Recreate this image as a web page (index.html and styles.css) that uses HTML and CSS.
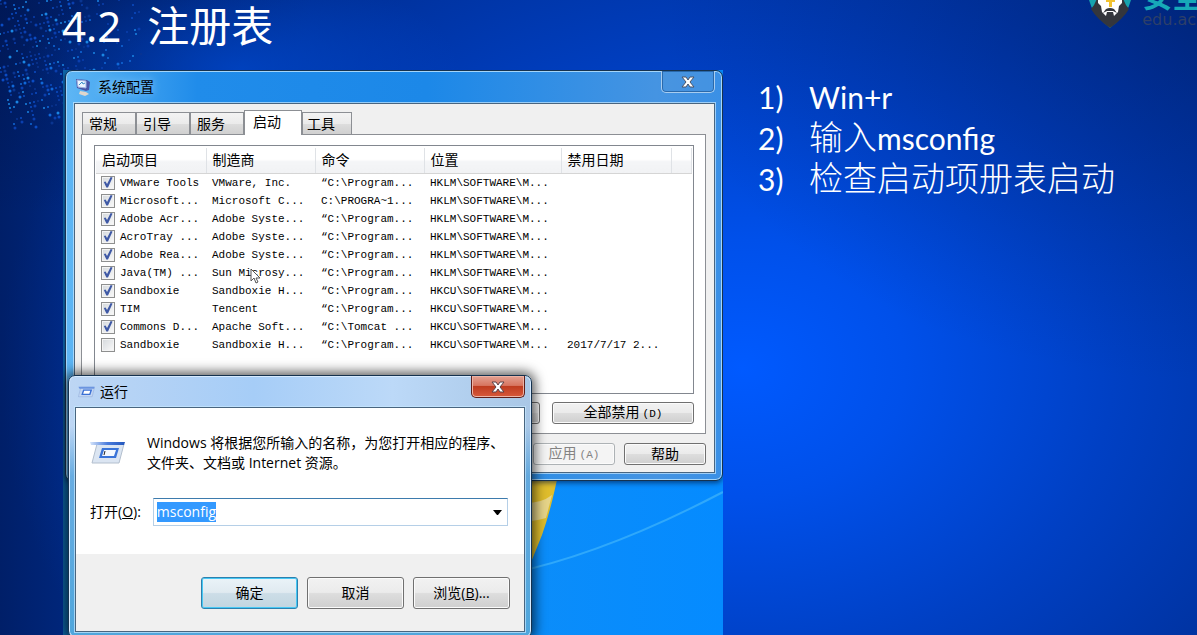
FILE: index.html
```html
<!DOCTYPE html>
<html lang="zh-CN">
<head>
<meta charset="utf-8">
<title>4.2 注册表</title>
<link rel="stylesheet" href="styles.css">
</head>
<body>
<div class="slide">
  <svg class="dots" id="dots" width="160" height="160" aria-hidden="true"></svg>

  <div class="brand">
    <svg class="brand-mark" width="42" height="52" viewBox="0 0 42 52" aria-hidden="true">
      <path d="M0 0H42V24Q39 38 21 52Q3 38 0 24Z" fill="#17a3ae"/>
      <path d="M2 33Q6 29 8 22L21 16L34 22Q36 29 40 33Q34 43 21 52Q8 43 2 33Z" fill="#34363c"/>
      <path d="M9 12H33V27L30 30L29 36L27 38L25 40L24 36H18L17 40L14 37L13 36L12 30L9 27Z" fill="#fff"/>
      <path d="M14 37L17 33Q21 31 25 33L28 37L24 35H18Z" fill="#34363c"/>
      <path d="M20 18H23V31H20ZM17 24H26V26H17Z" fill="#f2c230"/>
    </svg>
    <div class="brand-text"><span class="brand-name">安全</span><span class="brand-url">edu.ac</span></div>
  </div>

  <h1 class="title"><span>4.2</span><span>注册表</span></h1>

  <div class="columns">
    <section class="desktop">
      <svg class="wallpaper" viewBox="0 0 660 565" preserveAspectRatio="none" aria-hidden="true">
        <path d="M440 400H496Q488 440 479 465L460 512L440 565Z" fill="#dfbd2c"/>
        <path d="M450 432Q475 436 489 425L483 448Q470 452 450 452Z" fill="#e6d488"/>
        <path d="M440 505Q540 485 660 422" fill="none" stroke="#2fa8fb" stroke-width="2"/>
        <path d="M260 565Q340 552 430 565Z" fill="#b6cf6a"/>
      </svg>

      <div class="window config">
        <header class="titlebar">
          <svg width="16" height="18" viewBox="0 0 16 18" aria-hidden="true">
            <path d="M1 1L12 2L15 4L14 12L11 13L2 10Z" fill="#4a55a8"/>
            <path d="M2 2L11 3L11 10L3 9Z" fill="#eef4ff" stroke="#9fb2e0"/>
            <path d="M4 7L7 4L8 6L10 5" stroke="#3c8fc8" fill="none"/>
            <path d="M5 13L11 14L14 16L10 18L4 16Z" fill="#ded6cc"/>
          </svg>
          <h2>系统配置</h2>
          <button class="close" aria-label="关闭"><svg width="14" height="12" viewBox="0 0 14 12"><path d="M1 1H5L7 4L9 1H13L9 6L13 11H9L7 8L5 11H1L5 6Z" fill="#fff" stroke="#4c5468"/></svg></button>
        </header>
        <div class="client">
          <div class="tabs" role="tablist">
            <button role="tab" class="tab">常规</button>
            <button role="tab" class="tab">引导</button>
            <button role="tab" class="tab">服务</button>
            <button role="tab" class="tab active" aria-selected="true">启动</button>
            <button role="tab" class="tab">工具</button>
          </div>
          <div class="panel">
            <div class="list">
              <table>
                <colgroup><col class="c-item"><col class="c-maker"><col class="c-maker"><col class="c-place"><col class="c-item"><col></colgroup>
                <thead><tr><th>启动项目</th><th>制造商</th><th>命令</th><th>位置</th><th>禁用日期</th><th></th></tr></thead>
                <tbody>
                  <tr><td><label><input type="checkbox" checked>VMware Tools</label></td><td>VMware, Inc.</td><td>“C:\Program...</td><td>HKLM\SOFTWARE\M...</td><td></td><td></td></tr>
                  <tr><td><label><input type="checkbox" checked>Microsoft...</label></td><td>Microsoft C...</td><td>C:\PROGRA~1...</td><td>HKLM\SOFTWARE\M...</td><td></td><td></td></tr>
                  <tr><td><label><input type="checkbox" checked>Adobe Acr...</label></td><td>Adobe Syste...</td><td>“C:\Program...</td><td>HKLM\SOFTWARE\M...</td><td></td><td></td></tr>
                  <tr><td><label><input type="checkbox" checked>AcroTray ...</label></td><td>Adobe Syste...</td><td>“C:\Program...</td><td>HKLM\SOFTWARE\M...</td><td></td><td></td></tr>
                  <tr><td><label><input type="checkbox" checked>Adobe Rea...</label></td><td>Adobe Syste...</td><td>“C:\Program...</td><td>HKLM\SOFTWARE\M...</td><td></td><td></td></tr>
                  <tr><td><label><input type="checkbox" checked>Java(TM) ...</label></td><td>Sun Microsy...</td><td>“C:\Program...</td><td>HKLM\SOFTWARE\M...</td><td></td><td></td></tr>
                  <tr><td><label><input type="checkbox" checked>Sandboxie</label></td><td>Sandboxie H...</td><td>“C:\Program...</td><td>HKCU\SOFTWARE\M...</td><td></td><td></td></tr>
                  <tr><td><label><input type="checkbox" checked>TIM</label></td><td>Tencent</td><td>“C:\Program...</td><td>HKCU\SOFTWARE\M...</td><td></td><td></td></tr>
                  <tr><td><label><input type="checkbox" checked>Commons D...</label></td><td>Apache Soft...</td><td>“C:\Tomcat ...</td><td>HKCU\SOFTWARE\M...</td><td></td><td></td></tr>
                  <tr><td><label><input type="checkbox">Sandboxie</label></td><td>Sandboxie H...</td><td>“C:\Program...</td><td>HKCU\SOFTWARE\M...</td><td>2017/7/17 2...</td><td></td></tr>
                </tbody>
              </table>
            </div>
            <div class="actions">
              <button class="btn wide" aria-label="全部启用"></button>
              <button class="btn wide">全部禁用<span class="key">(D)</span></button>
            </div>
          </div>
          <div class="footer">
            <button class="btn" disabled>应用<span class="key">(A)</span></button>
            <button class="btn">帮助</button>
          </div>
        </div>
        <svg class="cursor" width="11" height="17" viewBox="0 0 11 17" aria-hidden="true"><path d="M1 1V13L4 10L6 15L8 14L6 10H10Z" fill="#fff" stroke="#555"/></svg>
      </div>

      <div class="window run">
        <header class="titlebar">
          <svg width="17" height="12" viewBox="0 0 36 24" aria-hidden="true">
            <path d="M6 2H35L30 22H1Z" fill="#c3d6f3" stroke="#8aa6d4"/>
            <path d="M1 1H35L34 5H3Z" fill="#6b95e0"/>
            <path d="M12 8H28L25 17H9Z" fill="#fff" stroke="#3a70d4" stroke-width="3"/>
          </svg>
          <h2>运行</h2>
          <button class="close red" aria-label="关闭"><svg width="14" height="12" viewBox="0 0 14 12"><path d="M1 1H5L7 4L9 1H13L9 6L13 11H9L7 8L5 11H1L5 6Z" fill="#fff" stroke="#5c4248"/></svg></button>
        </header>
        <div class="client">
          <div class="run-body">
            <div class="intro">
              <svg width="36" height="24" viewBox="0 0 36 24" aria-hidden="true">
                <defs><linearGradient id="bar" x1="0" x2="1"><stop offset="0" stop-color="#d5e4fa"/><stop offset=".5" stop-color="#4a7cdc"/><stop offset="1" stop-color="#2357bd"/></linearGradient></defs>
                <path d="M7 3H34L29 22H2Z" fill="#dbe5f2" stroke="#b3bfce"/>
                <path d="M0 1H35L34 4H1Z" fill="url(#bar)"/>
                <path d="M12 7H29L26 17H9Z" fill="#3a74d8"/>
                <path d="M14 9H26L24 15H12Z" fill="#f4f9ff"/>
                <path d="M15 10L14 14" stroke="#222"/>
              </svg>
              <p>Windows 将根据您所输入的名称，为您打开相应的程序、<br>文件夹、文档或 Internet 资源。</p>
            </div>
            <div class="field">
              <label for="open">打开(<u>O</u>):</label>
              <div class="combo">
                <input id="open" type="text" value="msconfig" autocomplete="off" spellcheck="false">
                <button aria-label="展开列表"><svg width="9" height="5" viewBox="0 0 9 5"><path d="M0 0H9L5 5H4Z"/></svg></button>
              </div>
            </div>
          </div>
          <div class="run-foot">
            <button class="btn default">确定</button>
            <button class="btn">取消</button>
            <button class="btn">浏览(<u>B</u>)...</button>
          </div>
        </div>
      </div>
    </section>

    <ol class="steps">
      <li><span>1)</span><span>Win+r</span></li>
      <li><span>2)</span><span><span class="cjk">输入</span>msconfig</span></li>
      <li><span>3)</span><span class="cjk">检查启动项册表启动</span></li>
    </ol>
  </div>
</div>
<script src="app.js"></script>
</body>
</html>
```

FILE: styles.css
```css
* { box-sizing: border-box; }

body { margin: 0; }

h1, h2, p, ol { margin: 0; padding: 0; font-weight: 400; }

button, input { font: inherit; color: inherit; margin: 0; }

.slide {
  position: relative;
  display: flex;
  flex-direction: column;
  height: 100vh;
  overflow: hidden;
  color: #fff;
  background:
    radial-gradient(ellipse 220px 100px at 20% 11%, rgba(0, 70, 200, .8), transparent),
    radial-gradient(ellipse 26% 34% at 0% 0%, rgba(0, 14, 60, .4), transparent),
    radial-gradient(ellipse 45% 60% at 100% 0%, rgba(0, 20, 80, .35), transparent),
    linear-gradient(90deg, rgba(0, 14, 60, .35), transparent 7%),
    radial-gradient(ellipse 62% 92% at 62% 58%, #005aff 0%, #0050ea 22%, #0040c4 50%, #0034a4 75%, #002880 100%);
}

.dots { position: absolute; left: 0; top: 0; }

.brand {
  position: absolute;
  top: -24px;
  left: 91%;
  display: flex;
  gap: 11px;
  white-space: nowrap;
}
.brand-text { display: flex; flex-direction: column; }
.brand-name {
  font: 700 30px/36px "Noto Sans CJK SC", sans-serif;
  color: #17a9b8;
}
.brand-url {
  font: 16px/16px "DejaVu Sans", sans-serif;
  color: #2d3f69;
}

.title {
  position: relative;
  display: flex;
  gap: 26px;
  padding: 0 62px;
  font: 400 42px/52px "Noto Sans", "Noto Sans CJK SC", sans-serif;
  height: 70px;
}

.columns {
  flex: 1;
  display: grid;
  grid-template-columns: 660fr 439fr;
  gap: 35px;
  padding-left: 63px;
  min-height: 0;
}

.desktop {
  position: relative;
  overflow: hidden;
  background: linear-gradient(90deg, #0d66a8, #128ff4 40%, #058bff);
  color: #000;
  font: 14px/20px "Open Sans", "Noto Sans CJK SC", sans-serif;
}
.wallpaper { position: absolute; width: 100%; height: 100%; }

.window {
  position: absolute;
  border: 1px solid #15324f;
  border-radius: 7px;
}
.window .client {
  border: 1px solid #49657f;
  outline: 1px solid rgba(200, 232, 255, .7);
}
.config {
  left: 2px;
  right: 0;
  top: 0;
  padding: 0 7px 7px 8px;
  background: linear-gradient(90deg, #5eb6f4, #208cea 20%, #1c88e8 55%, #4594e2 90%, #3a90e6);
  box-shadow: inset 0 0 0 1px #a4d5f9, 0 2px 5px rgba(0, 20, 60, .6);
}
.run {
  left: 5px;
  top: 305px;
  width: 464px;
  padding: 0 6px 5px 6px;
  background:
    linear-gradient(180deg, transparent 50px, rgba(68, 155, 218, .7) 100px, #4fa6dc),
    linear-gradient(90deg, #bdd6f4, #a6cdf7 40%, #bcd9f8 70%, #a9c7e6);
  box-shadow: inset 0 0 0 1px #d7ebff, 0 0 12px 3px rgba(0, 0, 0, .65);
}

.titlebar {
  display: flex;
  align-items: center;
  gap: 7px;
  height: 32px;
  padding-left: 1px;
}
.titlebar h2 { font-size: 14px; line-height: 20px; flex: 1; }
.config h2 { text-shadow: 0 0 8px #9fd6ff; }
.run .titlebar { height: 31px; padding-left: 3px; gap: 5px; }

.close {
  align-self: flex-start;
  display: flex;
  align-items: center;
  justify-content: center;
  width: 54px;
  height: 22px;
  padding: 0;
  border: 1px solid #a8cdf0;
  border-top: 0;
  border-radius: 0 0 5px 5px;
  background: rgba(80, 150, 220, .4);
  box-shadow: inset 0 0 0 1px #2a69ab;
}
.close.red {
  border-color: #5f1f1a;
  background: linear-gradient(#e4a192, #d77560 45%, #bf3c20 50%, #d7593b);
  box-shadow: inset 0 0 0 1px #edb4a6;
}

.config .client { padding: 6px 8px 7px 6px; background: #f0f0f0; }

.tabs { display: flex; align-items: flex-end; padding-left: 1px; }
.tab {
  width: 54px;
  height: 22px;
  padding: 0 0 0 6px;
  border: 1px solid #8c8f94;
  border-bottom: 0;
  background: linear-gradient(#f3f3f3, #ebebeb 50%, #dcdcdc 55%, #d0d0d0);
  text-align: left;
  line-height: 20px;
}
.tab:last-child { width: 50px; padding-left: 4px; }
.tab.active {
  width: 58px;
  height: 25px;
  padding: 0 0 2px 8px;
  margin-bottom: -1px;
  background: #fff;
}

.panel { border: 1px solid #8c8f94; background: #fff; padding: 10px 11px 9px 12px; }
.list {
  height: 249px;
  border: 1px solid #82878f;
  padding: 2px 1px;
}
table { width: 100%; border-collapse: collapse; table-layout: fixed; }
.c-item { width: 110px; }
.c-maker { width: 109px; }
.c-place { width: 137px; }
th {
  height: 25px;
  padding: 0 0 0 6px;
  border-right: 1px solid #dfe2e6;
  border-bottom: 1px solid #d5d5d5;
  background: linear-gradient(#fff, #fff 45%, #f4f5f7 55%, #f1f2f4);
  text-align: left;
  font-weight: 400;
  line-height: 20px;
}
td {
  height: 18px;
  padding: 0 0 0 6px;
  font: 11px/18px "Liberation Mono", monospace;
  white-space: nowrap;
}
td:first-child { padding-left: 5px; }
td label { display: flex; align-items: center; gap: 5px; }

input[type="checkbox"] {
  appearance: none;
  width: 14px;
  height: 14px;
  border: 1px solid #8e8f8f;
  background: linear-gradient(135deg, #d4d8dc, #fafafa);
  box-shadow: inset 0 0 0 1px #f4f4f4;
}
input[type="checkbox"]:checked::before {
  content: "";
  display: block;
  width: 12px;
  height: 12px;
  background: #3f59a5;
  clip-path: polygon(15% 46%, 30% 42%, 42% 62%, 72% 4%, 88% 8%, 50% 92%, 36% 92%);
}

.btn {
  width: 82px;
  height: 22px;
  padding: 0;
  border: 1px solid #707070;
  border-radius: 3px;
  background: linear-gradient(#f2f2f2, #ebebeb 48%, #dddddd 52%, #cfcfcf);
  box-shadow: inset 0 0 0 1px #fbfbfb;
  line-height: 18px;
}
.btn:disabled { border-color: #adb2b5; background: #f4f4f4; color: #838383; }
.btn.wide { width: 142px; }
.key { font: 11px/18px "Liberation Mono", monospace; padding-left: 3px; }
.actions { display: flex; justify-content: flex-end; gap: 12px; padding-top: 8px; }
.footer { display: flex; justify-content: flex-end; gap: 9px; padding-top: 9px; }

.cursor { position: absolute; left: 184px; top: 197px; }

.run .client { background: #fff; }
.run-body { padding: 25px 16px 28px 14px; }
.intro { display: flex; align-items: center; gap: 21px; }
.intro p { line-height: 20px; white-space: nowrap; }
.field { display: flex; align-items: center; gap: 12px; padding-top: 25px; }
.combo {
  flex: 1;
  display: flex;
  height: 28px;
  padding: 3px;
  border: 1px solid #b5cfe7;
  border-top-color: #3d7bad;
}
.combo input {
  flex: 1;
  min-width: 0;
  height: 20px;
  padding: 0;
  border: 0;
  outline: 0;
  background: none;
}
.combo input::selection { background: #3399ff; color: #fff; }
.combo button {
  display: flex;
  align-items: center;
  justify-content: center;
  width: 14px;
  padding: 0;
  border: 0;
  background: none;
}
.run-foot {
  display: flex;
  justify-content: flex-end;
  gap: 9px;
  padding: 23px 14px 22px;
  background: #f0f0f0;
}
.run-foot .btn { width: 97px; height: 32px; }
.run-foot .default {
  border-color: #2c80ae;
  background: linear-gradient(#eaf3f8, #e0eaf0 48%, #ccdde7 52%, #c2d5e0);
  box-shadow: inset 0 0 0 1px #47c8f4;
}

.steps {
  list-style: none;
  padding-top: 7px;
  font: 30px/41px Lato, "Noto Sans CJK SC", sans-serif;
}
.steps li { display: flex; align-items: baseline; gap: 16px; height: 41px; }
.steps li > span:first-child { flex: 0 0 35px; }
.cjk { font: 300 34px/34px "Noto Sans CJK SC", sans-serif; }
```

FILE: app.js
```js
// Scatter a slanted grid of dots over the top-left corner of the slide.
const dots = document.getElementById("dots");
const colors = ["#0a3fae", "#0b4cc4", "#1068d8", "#0a3590", "#0a3fae", "#1a86e4"];
let seed = 7;
const random = () => (seed = (seed * 16807) % 2147483647) / 2147483647;

for (let row = 0; row < 56; row++) {
  for (let col = -4; col < 46; col++) {
    const x = col * 4 + row;
    const y = row * 4 - col;
    const edge = Math.min(1, (146 - x * 0.3 - y) / 30, (146 - x) / 90);
    if (x < 0 || y < 0 || random() > edge * 0.5) continue;
    const dot = document.createElementNS("http://www.w3.org/2000/svg", "circle");
    dot.setAttribute("cx", x);
    dot.setAttribute("cy", y);
    dot.setAttribute("r", random() > 0.75 ? 1.5 : 1);
    dot.setAttribute("fill", colors[Math.floor(random() * colors.length)]);
    dots.appendChild(dot);
  }
}

// The Run box opens with its command selected.
const command = document.getElementById("open");
command.focus();
command.select();
```
